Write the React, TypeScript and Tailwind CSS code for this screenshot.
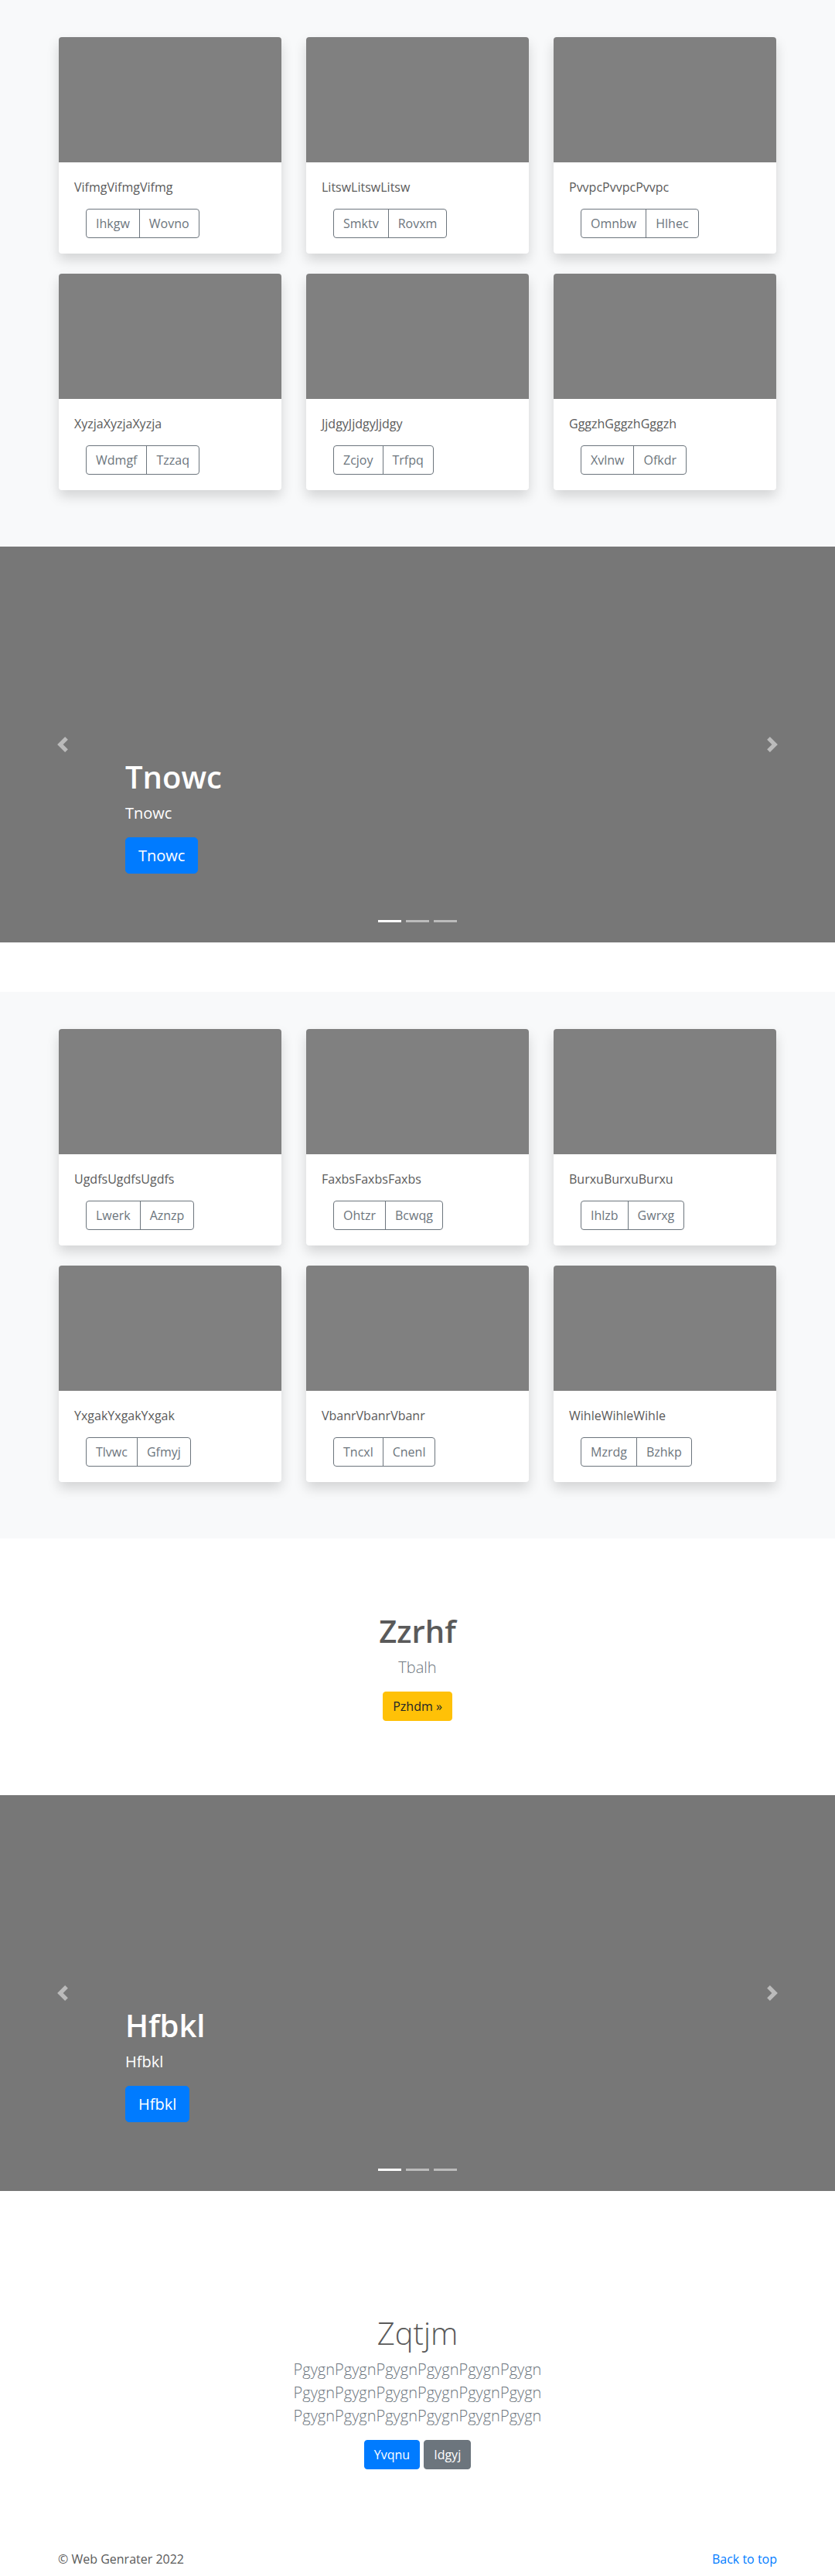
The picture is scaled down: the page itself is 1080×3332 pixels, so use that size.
import React from 'react';

type Card = { title: string; actions: [string, string] };

const ALBUM_ONE: Card[] = [
  { title: 'VifmgVifmgVifmg', actions: ['Ihkgw', 'Wovno'] },
  { title: 'LitswLitswLitsw', actions: ['Smktv', 'Rovxm'] },
  { title: 'PvvpcPvvpcPvvpc', actions: ['Omnbw', 'Hlhec'] },
  { title: 'XyzjaXyzjaXyzja', actions: ['Wdmgf', 'Tzzaq'] },
  { title: 'JjdgyJjdgyJjdgy', actions: ['Zcjoy', 'Trfpq'] },
  { title: 'GggzhGggzhGggzh', actions: ['Xvlnw', 'Ofkdr'] },
];

const ALBUM_TWO: Card[] = [
  { title: 'UgdfsUgdfsUgdfs', actions: ['Lwerk', 'Aznzp'] },
  { title: 'FaxbsFaxbsFaxbs', actions: ['Ohtzr', 'Bcwqg'] },
  { title: 'BurxuBurxuBurxu', actions: ['Ihlzb', 'Gwrxg'] },
  { title: 'YxgakYxgakYxgak', actions: ['Tlvwc', 'Gfmyj'] },
  { title: 'VbanrVbanrVbanr', actions: ['Tncxl', 'Cnenl'] },
  { title: 'WihleWihleWihle', actions: ['Mzrdg', 'Bzhkp'] },
];

function AlbumCard({ card }: { card: Card }) {
  return (
    <div className="bg-white rounded-[4px] overflow-hidden shadow-[0_8px_16px_rgba(0,0,0,0.15)]">
      {/* Thumbnail placeholder */}
      <div className="h-[162px] bg-[#808080]" />
      <div className="p-5">
        <p className="mb-4 leading-6">{card.title}</p>
        <div className="ml-[15px] inline-flex border border-[#6c757d] rounded-[4px] text-[#6c757d]">
          <button className="px-3 py-1.5 leading-6">{card.actions[0]}</button>
          <button className="px-3 py-1.5 leading-6 border-l border-[#6c757d]">{card.actions[1]}</button>
        </div>
      </div>
    </div>
  );
}

function Album({ cards }: { cards: Card[] }) {
  return (
    <section className="bg-[#f8f9fa] pt-12 pb-[73px]">
      <div className="mx-auto w-[928px] grid grid-cols-3 gap-x-8 gap-y-[26px]">
        {cards.map((card) => (
          <AlbumCard key={card.title} card={card} />
        ))}
      </div>
    </section>
  );
}

function Chevron({ dir }: { dir: 'prev' | 'next' }) {
  return (
    <svg width="20" height="20" viewBox="0 0 8 8" fill="#fff" className="opacity-50">
      {dir === 'prev' ? (
        <path d="M5.25 0l-4 4 4 4 1.5-1.5L4.25 4l2.5-2.5L5.25 0z" />
      ) : (
        <path d="M2.75 0l-1.5 1.5L3.75 4l-2.5 2.5L2.75 8l4-4-4-4z" />
      )}
    </svg>
  );
}

function Carousel({ label }: { label: string }) {
  return (
    <div className="relative h-[512px] bg-[#777777] mb-16">
      {/* Prev / next controls */}
      <div className="absolute left-0 top-0 bottom-0 w-[15%] flex items-center justify-center">
        <Chevron dir="prev" />
      </div>
      <div className="absolute right-0 top-0 bottom-0 w-[15%] flex items-center justify-center">
        <Chevron dir="next" />
      </div>

      {/* Caption */}
      <div className="absolute left-[15%] right-[15%] bottom-[89px] text-left text-white">
        <h1 className="text-[40px] leading-[48px] font-semibold mb-2">{label}</h1>
        <p className="text-xl leading-[30px] mb-4">{label}</p>
        <button className="bg-[#007bff] text-white text-xl leading-[29px] px-4 py-2 border border-[#007bff] rounded-[5px]">
          {label}
        </button>
      </div>

      {/* Indicators */}
      <div className="absolute left-0 right-0 bottom-[26px] flex justify-center">
        {[0, 1, 2].map((i) => (
          <span
            key={i}
            className={i === 0 ? 'mx-[3px] w-[30px] h-[3px] bg-white' : 'mx-[3px] w-[30px] h-[3px] bg-white/50'}
          />
        ))}
      </div>
    </div>
  );
}

export default function App() {
  return (
    <div className="min-h-screen bg-white text-[#5a5a5a] text-base leading-6 font-['Open_Sans','Noto_Sans',sans-serif]">
      <Album cards={ALBUM_ONE} />
      <Carousel label="Tnowc" />
      <Album cards={ALBUM_TWO} />

      {/* Call to action */}
      <section className="py-24 text-center">
        <h1 className="text-[40px] leading-[48px] font-semibold mb-2">Zzrhf</h1>
        <p className="text-xl leading-[30px] font-light text-[#6c757d] mb-4">Tbalh</p>
        <button className="bg-[#ffc107] text-[#212529] px-3 py-1.5 leading-6 border border-[#ffc107] rounded-[4px]">
          Pzhdm »
        </button>
      </section>

      <Carousel label="Hfbkl" />

      {/* Jumbotron */}
      <section className="pt-24 pb-12 text-center">
        <h1 className="text-[40px] leading-[48px] font-light mb-2">Zqtjm</h1>
        <p className="mx-auto max-w-[450px] text-xl leading-[30px] font-light text-[#6c757d] mb-4">
          PgygnPgygnPgygnPgygnPgygnPgygn PgygnPgygnPgygnPgygnPgygnPgygn PgygnPgygnPgygnPgygnPgygnPgygn
        </p>
        <div className="flex justify-center gap-[5px] my-2">
          <button className="bg-[#007bff] text-white px-3 py-1.5 leading-6 border border-[#007bff] rounded-[4px]">
            Yvqnu
          </button>
          <button className="bg-[#6c757d] text-white px-3 py-1.5 leading-6 border border-[#6c757d] rounded-[4px]">
            Idgyj
          </button>
        </div>
      </section>

      <footer className="py-12">
        <div className="mx-auto w-[930px] flex justify-between">
          <p className="text-[#5a5a5a]">© Web Genrater 2022</p>
          <a href="#" className="text-[#007bff]">
            Back to top
          </a>
        </div>
      </footer>
    </div>
  );
}
